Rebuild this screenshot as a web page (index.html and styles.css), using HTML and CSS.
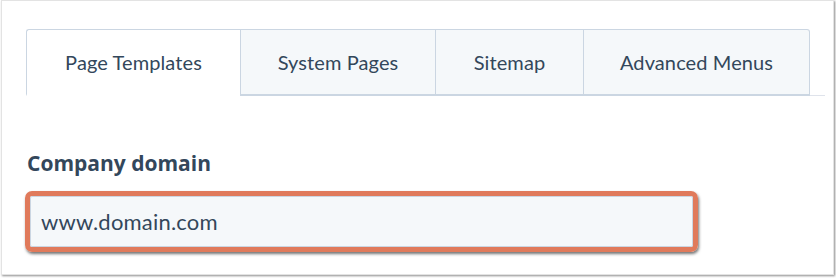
FILE: index.html
```html
<!DOCTYPE html>
<html lang="en">
<head>
    <meta charset="UTF-8">
    <meta name="viewport" content="width=device-width, initial-scale=1.0">
    <title>Page settings</title>
    <link rel="stylesheet" href="styles.css">
</head>
<body>
    <div class="panel">
        <div class="tabs">
            <div class="tab active">Page Templates</div>
            <div class="tab">System Pages</div>
            <div class="tab">Sitemap</div>
            <div class="tab">Advanced Menus</div>
        </div>

        <div class="field">
            <label class="field-label" for="domain">Company domain</label>
            <div class="highlight">
                <input class="field-input" id="domain" type="text" value="www.domain.com">
            </div>
        </div>
    </div>
</body>
</html>
```

FILE: styles.css
```css
/* Remove default spacing */
* {
    margin: 0;
    padding: 0;
    box-sizing: border-box;
}

body {
    font-family: Lato, "Open Sans", sans-serif;
    background: #fff;
    color: #33475b;
    width: 836px;
    height: 278px;
    overflow: hidden;
}

/* The screenshot frame */
.panel {
    margin-left: 1px;
    width: 833px;
    height: 275px;
    background: #fff;
    border: 1px solid #e3e3e3;
    box-shadow: 1px 1px 2px rgba(0, 0, 0, 0.45);
    padding: 28px 8px 0 24px;
}

/* Tab row */
.tabs {
    display: flex;
    border-bottom: 1px solid #dfe3eb;
}

.tab {
    height: 67px;
    display: flex;
    align-items: center;
    justify-content: center;
    font-size: 20px;
    letter-spacing: 0.1px;
    background: #f5f8fa;
    border-top: 1px solid #cbd6e2;
    border-left: 1px solid #cbd6e2;
    border-bottom: 2px solid #cbd6e2;
    margin-bottom: -1px;
}

.tab:nth-child(1) { width: 214px; }
.tab:nth-child(2) { width: 195px; }
.tab:nth-child(3) { width: 148px; }
.tab:nth-child(4) {
    width: 227px;
    border-right: 1px solid #cbd6e2;
    border-top-right-radius: 3px;
}

.tab.active {
    background: #fff;
    border-bottom-color: #fff;
    border-top-left-radius: 3px;
}

/* Form field */
.field {
    padding-top: 53px;
}

.field-label {
    display: block;
    font-family: "Open Sans", Lato, sans-serif;
    font-size: 21px;
    line-height: 28px;
    font-weight: bold;
    color: #33475b;
    margin-bottom: 14px;
    padding-left: 1px;
}

/* Orange annotation around the input */
.highlight {
    width: 673px;
    border: 5px solid #e07a5b;
    border-radius: 7px;
    box-shadow: 1px 2px 3px rgba(0, 0, 0, 0.55);
    margin-left: -1px;
}

.field-input {
    display: block;
    width: 100%;
    height: 51px;
    border: 1px solid #cbd6e2;
    border-radius: 2px;
    background: #f5f8fa;
    padding: 0 10px;
    font-family: Lato, "Open Sans", sans-serif;
    font-size: 22px;
    letter-spacing: 0.2px;
    color: #33475b;
    outline: none;
}
```
